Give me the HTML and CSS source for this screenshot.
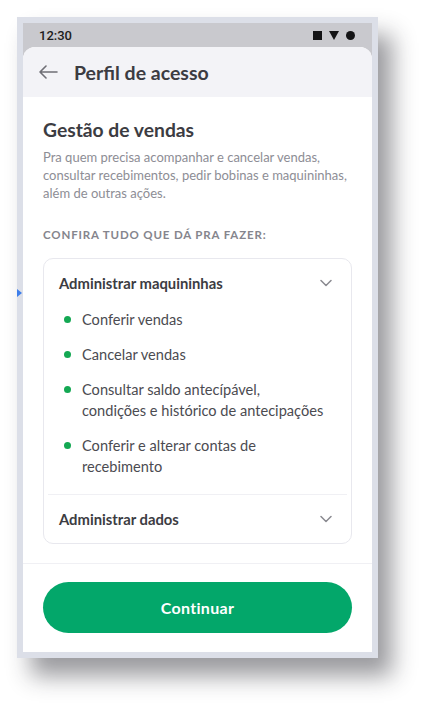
FILE: index.html
```html
<!DOCTYPE html>
<html lang="pt-BR">
<head>
	<meta charset="UTF-8">
	<title>Perfil de acesso</title>
	<link rel="stylesheet" href="styles.css">
</head>
<body>
	<div class="stage">
		<div class="phone">
			<div class="status">
				<span class="clock">12:30</span>
				<span class="status-icons">
					<i class="ic-square"></i>
					<i class="ic-tri"></i>
					<i class="ic-dot"></i>
				</span>
			</div>
			<div class="sheet">
				<div class="topbar">
					<svg class="back" width="20" height="14" viewBox="0 0 20 14"><path d="M19 7H2M8 1L2 7l6 6" fill="none" stroke="#6f6f76" stroke-width="1.6" stroke-linecap="round" stroke-linejoin="round"/></svg>
					<h1>Perfil de acesso</h1>
				</div>
				<div class="content">
					<h2>Gestão de vendas</h2>
					<p class="desc">Pra quem precisa acompanhar e cancelar vendas, consultar recebimentos, pedir bobinas e maquininhas, além de outras ações.</p>
					<div class="label">Confira tudo que dá pra fazer:</div>
					<div class="card">
						<div class="group">
							<div class="group-head">
								<span>Administrar maquininhas</span>
								<svg width="12" height="8" viewBox="0 0 12 8"><path d="M1 1.5l5 5 5-5" fill="none" stroke="#8a8a90" stroke-width="1.5" stroke-linecap="round" stroke-linejoin="round"/></svg>
							</div>
							<ul class="items">
								<li>Conferir vendas</li>
								<li>Cancelar vendas</li>
								<li>Consultar saldo antecípável,<br>condições e histórico de antecipações</li>
								<li>Conferir e alterar contas de<br>recebimento</li>
							</ul>
						</div>
						<div class="group closed">
							<div class="group-head">
								<span>Administrar dados</span>
								<svg width="12" height="8" viewBox="0 0 12 8"><path d="M1 1.5l5 5 5-5" fill="none" stroke="#8a8a90" stroke-width="1.5" stroke-linecap="round" stroke-linejoin="round"/></svg>
							</div>
						</div>
					</div>
				</div>
				<div class="footer">
					<a class="btn" href="javascript:;">Continuar</a>
				</div>
			</div>
			<span class="pointer"></span>
		</div>
	</div>
</body>
</html>
```

FILE: styles.css
```css
*{margin:0;padding:0;box-sizing:border-box;list-style:none;text-decoration:none;}
html,body{background:#fff;}
body{font-family:Lato,"Open Sans",sans-serif;}
.stage{padding:17px 0 48px 17px;}
.phone{position:relative;width:361px;height:641px;border:6px solid #dcdfe8;background:#c9c9ce;display:flex;flex-direction:column;box-shadow:14px 18px 22px rgba(30,30,40,.45);}

.status{height:24px;display:flex;align-items:center;justify-content:space-between;padding:0 17px 0 16px;}
.clock{font-family:Roboto,sans-serif;font-weight:500;font-size:13px;color:#1d1d20;}
.status-icons{display:flex;align-items:center;gap:7px;}
.ic-square{display:block;width:9px;height:9px;background:#141416;}
.ic-tri{display:block;width:0;height:0;border-left:5.5px solid transparent;border-right:5.5px solid transparent;border-top:9px solid #141416;}
.ic-dot{display:block;width:9px;height:9px;border-radius:50%;background:#141416;}

.sheet{flex:1;display:flex;flex-direction:column;background:#fff;border-radius:12px 12px 0 0;overflow:hidden;}
.topbar{height:50px;background:#f3f3f7;display:flex;align-items:center;padding-left:15px;}
.back{margin-right:16px;}
.topbar h1{font-size:19.5px;font-weight:700;color:#3c3c42;}

.content{flex:1;padding:21px 20px 0 20px;}
.content h2{font-size:19.3px;line-height:24px;font-weight:700;color:#3c3c42;}
.desc{margin-top:6px;font-size:13px;line-height:18px;color:#8d8d95;}
.label{margin-top:25px;font-size:11.5px;line-height:16px;font-weight:700;letter-spacing:.85px;text-transform:uppercase;color:#85858d;}

.card{margin-top:15px;border:1px solid #e8e8ee;border-radius:10px;}
.group-head{display:flex;align-items:center;justify-content:space-between;padding:14px 19px 16px 15px;font-size:14.8px;line-height:20px;font-weight:700;color:#3c3c42;}
.items{padding:0 10px 17px 19px;display:flex;flex-direction:column;gap:14px;}
.items li{position:relative;padding-left:19px;font-size:14.6px;line-height:21px;color:#4b4b51;white-space:nowrap;}
.items li:before{content:"";position:absolute;left:1px;top:7px;width:7px;height:7px;border-radius:50%;background:#14a853;}
.closed{border-top:1px solid #f0f0f4;margin:0 4px;}
.closed .group-head{padding:14px 15px 14px 11px;}

.footer{border-top:1px solid #f0f0f4;padding:18px 20px 19px 20px;}
.btn{display:block;height:51px;line-height:51px;border-radius:26px;background:#03a76a;color:#fff;text-align:center;font-size:16px;font-weight:700;letter-spacing:.3px;}

.pointer{position:absolute;left:-6px;top:266px;width:0;height:0;border-top:4px solid transparent;border-bottom:4px solid transparent;border-left:5px solid #3d7eea;}
```
